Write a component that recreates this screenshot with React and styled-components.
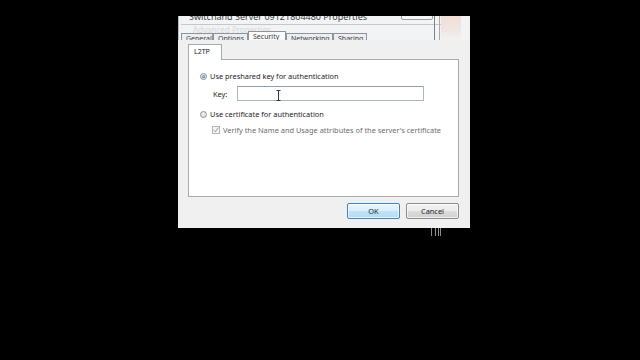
import React from "react";
import styled, { createGlobalStyle } from "styled-components";

const Global = createGlobalStyle`
  html, body { margin: 0; padding: 0; background: #000; }
  body { font-family: "Noto Sans", "Open Sans", sans-serif; }
  * { box-sizing: border-box; }
`;

const Stage = styled.div`
  width: 640px;
  height: 360px;
  background: #000;
  padding: 16px 0 0 178px;
  overflow: hidden;
`;

const Window = styled.div`
  width: 292px;
  display: flex;
  flex-direction: column;
`;

const BackStrip = styled.div`
  position: relative;
  height: 24px;
  background: #f2f3f4;
  border-left: 1px solid #b9bcc0;
  overflow: hidden;
  display: flex;
  flex-direction: column;
`;

const TitleText = styled.div`
  margin-top: -4px;
  padding-left: 10px;
  height: 10px;
  font-size: 9px;
  line-height: 10px;
  color: #3a3d40;
  white-space: nowrap;
`;

const CaptionBox = styled.div`
  position: absolute;
  left: 222px;
  top: -2px;
  width: 32px;
  height: 6px;
  border: 1px solid #9aa0a6;
  border-radius: 0 0 2px 2px;
  background: #f7f7f7;
`;

const CloseGlow = styled.div`
  position: absolute;
  left: 262px;
  top: 0;
  width: 20px;
  height: 24px;
  background: linear-gradient(#f4ddd6, #efe6e3 60%, #f2f2f2);
`;

const SideLines = styled.div`
  position: absolute;
  left: 255px;
  top: 0;
  width: 6px;
  height: 24px;
  border-left: 1px solid #7d8288;
  border-right: 1px solid #a6abb0;
`;

const Rule = styled.div`
  margin: 2px 20px 0 2px;
  height: 1px;
  background: #c4c7cb;
`;

const Ghost = styled.div`
  position: absolute;
  left: 14px;
  top: 10px;
  font-size: 8px;
  line-height: 8px;
  color: #d6d8db;
  white-space: nowrap;
`;

const TabRow = styled.div`
  display: flex;
  align-items: flex-end;
  margin-top: 6px;
  padding-left: 2px;
  position: relative;
  z-index: 1;
`;

const BackTab = styled.div`
  height: ${(p) => (p.$active ? 9 : 7)}px;
  width: ${(p) => p.$w}px;
  border: 1px solid #8f949a;
  border-bottom: none;
  background: ${(p) => (p.$active ? "#fbfbfb" : "#eceef0")};
  font-size: 7px;
  line-height: 9px;
  padding-left: 4px;
  color: #3b3e42;
  overflow: hidden;
  white-space: nowrap;
`;

const Dialog = styled.div`
  height: 188px;
  background: #f0f0f0;
  padding: 4px 11px 0 10px;
  display: flex;
  flex-direction: column;
`;

const TabStrip = styled.div`
  display: flex;
  height: 15px;
  position: relative;
  z-index: 1;
`;

const Tab = styled.div`
  width: 34px;
  height: 16px;
  background: #fff;
  border: 1px solid #a7abb0;
  border-bottom: none;
  font-size: 7px;
  line-height: 14px;
  padding-left: 5px;
  color: #222;
`;

const Panel = styled.div`
  height: 138px;
  background: #fff;
  border: 1px solid #a7abb0;
  padding: 12px 0 0 11px;
  display: flex;
  flex-direction: column;
  font-size: 7.4px;
  color: #1e1e1e;
`;

const OptionRow = styled.div`
  display: flex;
  align-items: center;
  height: 8px;
  gap: 3px;
  margin-left: ${(p) => p.$indent || 0}px;
  margin-top: ${(p) => p.$mt || 0}px;
  color: ${(p) => (p.$disabled ? "#6d6d6d" : "#1e1e1e")};
  white-space: nowrap;
`;

const Radio = styled.span`
  width: 7px;
  height: 7px;
  border-radius: 50%;
  border: 1px solid #8d9196;
  background: radial-gradient(circle at 50% 40%, #f2f2f2, #d5d8dc);
  display: flex;
  align-items: center;
  justify-content: center;
  &::after {
    content: "";
    display: ${(p) => (p.$checked ? "block" : "none")};
    width: 3px;
    height: 3px;
    border-radius: 50%;
    background: radial-gradient(circle at 40% 35%, #9fd0f2, #1d5ea0);
  }
`;

const CheckBox = styled.span`
  width: 8px;
  height: 8px;
  border: 1px solid #b3b6ba;
  background: #f3f3f3;
  display: flex;
  align-items: center;
  justify-content: center;
`;

const KeyRow = styled.div`
  display: flex;
  align-items: center;
  margin: 6px 0 0 13px;
  gap: 8px;
`;

const KeyLabel = styled.span`
  width: 16px;
  color: #1e1e1e;
`;

const KeyInput = styled.div`
  position: relative;
  width: 187px;
  height: 15px;
  border: 1px solid #a9b7c6;
  border-top-color: #8fa0b2;
  border-radius: 1px;
  background: #fff;
`;

const Cursor = styled.svg`
  position: absolute;
  left: 38px;
  top: 3px;
`;

const ButtonRow = styled.div`
  display: flex;
  justify-content: flex-end;
  gap: 6px;
  margin-top: 6px;
`;

const Button = styled.div`
  width: 53px;
  height: 16px;
  border-radius: 2px;
  border: 1px solid ${(p) => (p.$primary ? "#3a86c4" : "#8b8b8b")};
  background: ${(p) =>
    p.$primary
      ? "linear-gradient(#eaf5fc 0%, #d9eefa 50%, #c0e2f6 51%, #b4dbf3 100%)"
      : "linear-gradient(#f3f3f3 0%, #ebebeb 50%, #dddddd 51%, #cfcfcf 100%)"};
  box-shadow: inset 0 0 0 1px rgba(255,255,255,0.7);
  font-size: 7.4px;
  line-height: 14px;
  text-align: center;
  color: #1e1e1e;
`;

const Remnant = styled.div`
  margin-left: 253px;
  width: 10px;
  height: 8px;
  border-left: 1px solid #8a8a8a;
  border-right: 1px solid #8a8a8a;
  background: linear-gradient(90deg, transparent 3px, #9a9a9a 3px, #9a9a9a 4px, transparent 4px, transparent 6px, #9a9a9a 6px, #9a9a9a 7px, transparent 7px);
`;

export default function App() {
  return (
    <>
      <Global />
      <Stage>
        <Window>
          <BackStrip>
            <TitleText>Switchand Server 09121804480 Properties</TitleText>
            <Rule />
            <Ghost>Advanced Properties</Ghost>
            <TabRow>
              <BackTab $w={32}>General</BackTab>
              <BackTab $w={35}>Options</BackTab>
              <BackTab $w={38} $active>Security</BackTab>
              <BackTab $w={47}>Networking</BackTab>
              <BackTab $w={34}>Sharing</BackTab>
            </TabRow>
            <CaptionBox />
            <SideLines />
            <CloseGlow />
          </BackStrip>
          <Dialog>
            <TabStrip>
              <Tab>L2TP</Tab>
            </TabStrip>
            <Panel>
              <OptionRow>
                <Radio $checked />
                <span>Use preshared key for authentication</span>
              </OptionRow>
              <KeyRow>
                <KeyLabel>Key:</KeyLabel>
                <KeyInput>
                  <Cursor width="5" height="11" viewBox="0 0 5 11">
                    <path d="M0.5 0.5h4M2.5 0.5v10M0.5 10.5h4" stroke="#333" strokeWidth="1" fill="none" />
                  </Cursor>
                </KeyInput>
              </KeyRow>
              <OptionRow $mt={9}>
                <Radio />
                <span>Use certificate for authentication</span>
              </OptionRow>
              <OptionRow $indent={12} $mt={8} $disabled>
                <CheckBox>
                  <svg width="6" height="6" viewBox="0 0 6 6">
                    <path d="M0.8 3.2 L2.3 4.8 L5.3 0.8" stroke="#9a9a9a" strokeWidth="1" fill="none" />
                  </svg>
                </CheckBox>
                <span>Verify the Name and Usage attributes of the server's certificate</span>
              </OptionRow>
            </Panel>
            <ButtonRow>
              <Button $primary>OK</Button>
              <Button>Cancel</Button>
            </ButtonRow>
          </Dialog>
          <Remnant />
        </Window>
      </Stage>
    </>
  );
}
